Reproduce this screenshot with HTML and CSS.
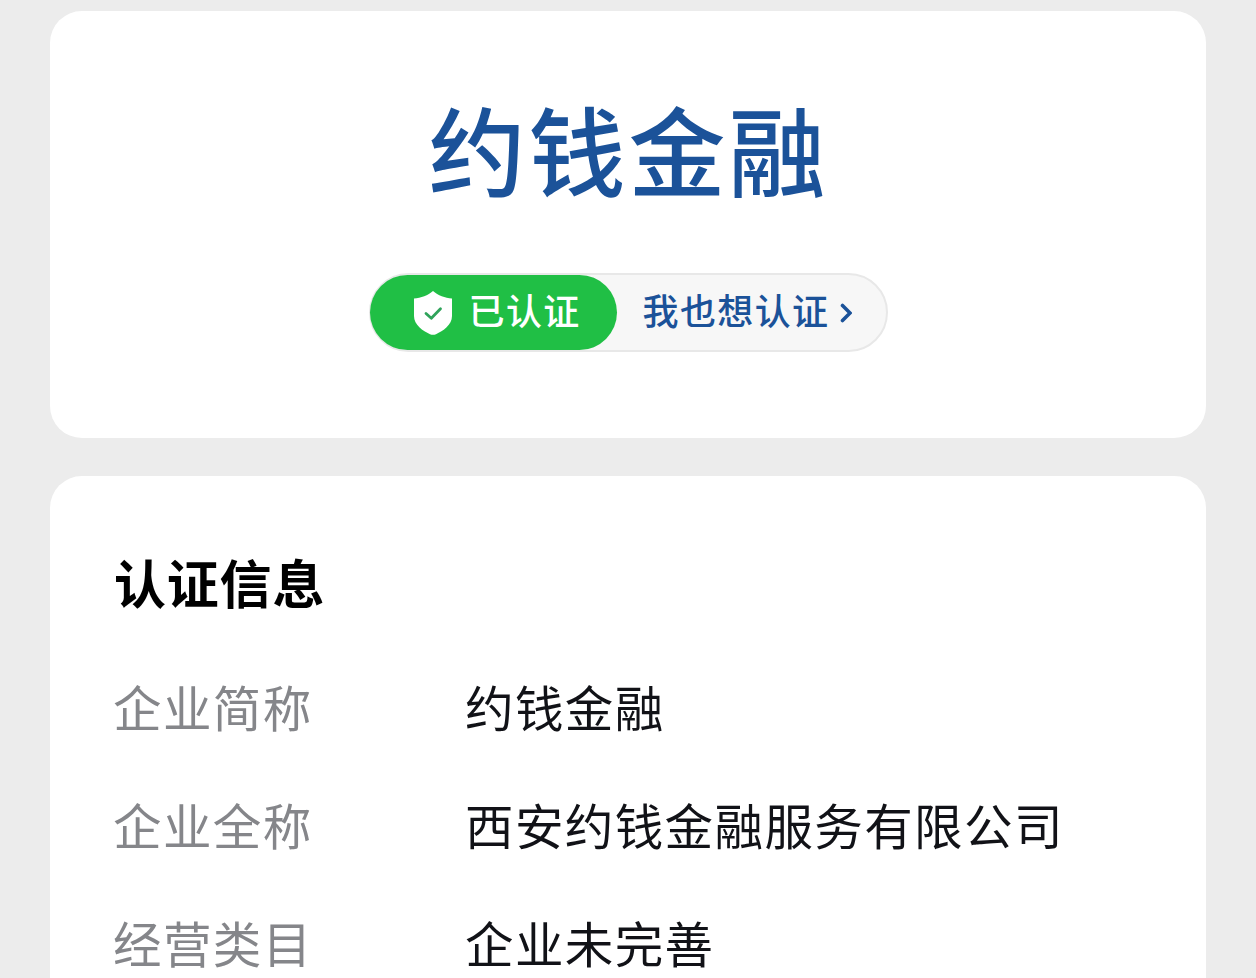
FILE: index.html
```html
<!DOCTYPE html>
<html lang="zh-CN">

<head>
  <meta charset="UTF-8">
  <meta name="viewport" content="width=device-width, initial-scale=1.0">
  <title>约钱金融</title>
  <link rel="stylesheet" href="styles.css">
</head>

<body>
  <section class="card profile">
    <h1>约钱金融</h1>
    <div class="verify">
      <span class="verified">
        <svg class="shield" viewBox="0 0 38 44">
          <path fill="#fff" d="M19 0C24 4.500 31 7 38 7.500V25C38 34 29 40 22 43.200Q19 44.500 16 43.200C9 40 0 34 0 25V7.500C7 7 14 4.500 19 0Z" />
          <path fill="none" stroke="#2fa35a" stroke-width="2.800" stroke-linecap="round" stroke-linejoin="round" d="M12 22.500L17.300 27.300L26.500 17.800" />
        </svg>
        <span class="label">已认证</span>
      </span>
      <a class="apply" href="#">
        <span class="label">我也想认证</span>
        <svg class="arrow" viewBox="0 0 12 20">
          <path fill="none" stroke="currentColor" stroke-width="3.600" stroke-linecap="round" d="M2.500 2.500L10 10L2.500 17.500" />
        </svg>
      </a>
    </div>
  </section>

  <section class="card info">
    <h2>认证信息</h2>
    <dl>
      <dt>企业简称</dt>
      <dd>约钱金融</dd>
      <dt>企业全称</dt>
      <dd>西安约钱金融服务有限公司</dd>
      <dt>经营类目</dt>
      <dd>企业未完善</dd>
    </dl>
  </section>
</body>

</html>
```

FILE: styles.css
```css
:root {
  --page: #ececec;
  --blue: #1b5299;
  --green: #20bf45;
}

* {
  box-sizing: border-box;
}

body,
h1,
h2,
dl,
dd {
  margin: 0;
}

body {
  height: 978px;
  padding: 11px 50px 0;
  overflow: hidden;
  background: var(--page);
  font-family: "Noto Sans CJK SC", sans-serif;
}

.card {
  background: #fff;
  border-radius: 32px;
}

.profile {
  display: flex;
  flex-direction: column;
  align-items: center;
  height: 427px;
  padding-top: 65px;
}

h1 {
  padding-left: 1px;
  color: var(--blue);
  font-size: 97px;
  font-weight: 500;
  letter-spacing: 3px;
  line-height: 142px;
}

.verify {
  display: flex;
  width: 519px;
  height: 79px;
  margin-top: 55px;
  border: 2px solid #e8e8e8;
  border-radius: 40px;
  background: #f7f7f7;
  font-size: 36px;
  font-weight: 500;
  letter-spacing: 1.4px;
  line-height: 75px;
}

.verified {
  display: flex;
  align-items: center;
  gap: 17px;
  width: 247px;
  margin-left: -1px;
  padding-left: 44px;
  border-radius: 38px;
  background: var(--green);
  color: #fff;
}

.shield {
  width: 38px;
  height: 44px;
}

.label {
  padding-bottom: 6px;
}

.apply {
  display: flex;
  align-items: center;
  gap: 10px;
  padding-left: 26px;
  color: var(--blue);
  text-decoration: none;
}

.arrow {
  width: 12px;
  height: 20px;
}

.info {
  height: 502px;
  margin-top: 38px;
  padding: 68px 64px 0;
  border-radius: 32px 32px 0 0;
}

h2 {
  font-size: 52px;
  font-weight: 700;
  letter-spacing: 0.8px;
  line-height: 76px;
}

dl {
  display: grid;
  grid-template-columns: 352px 1fr;
  grid-auto-rows: 118px;
  margin: 27px 0 0 -1px;
  font-size: 48.5px;
  letter-spacing: 1.4px;
  line-height: 118px;
}

dt {
  color: #85868a;
}

dd {
  color: #111217;
}
```
